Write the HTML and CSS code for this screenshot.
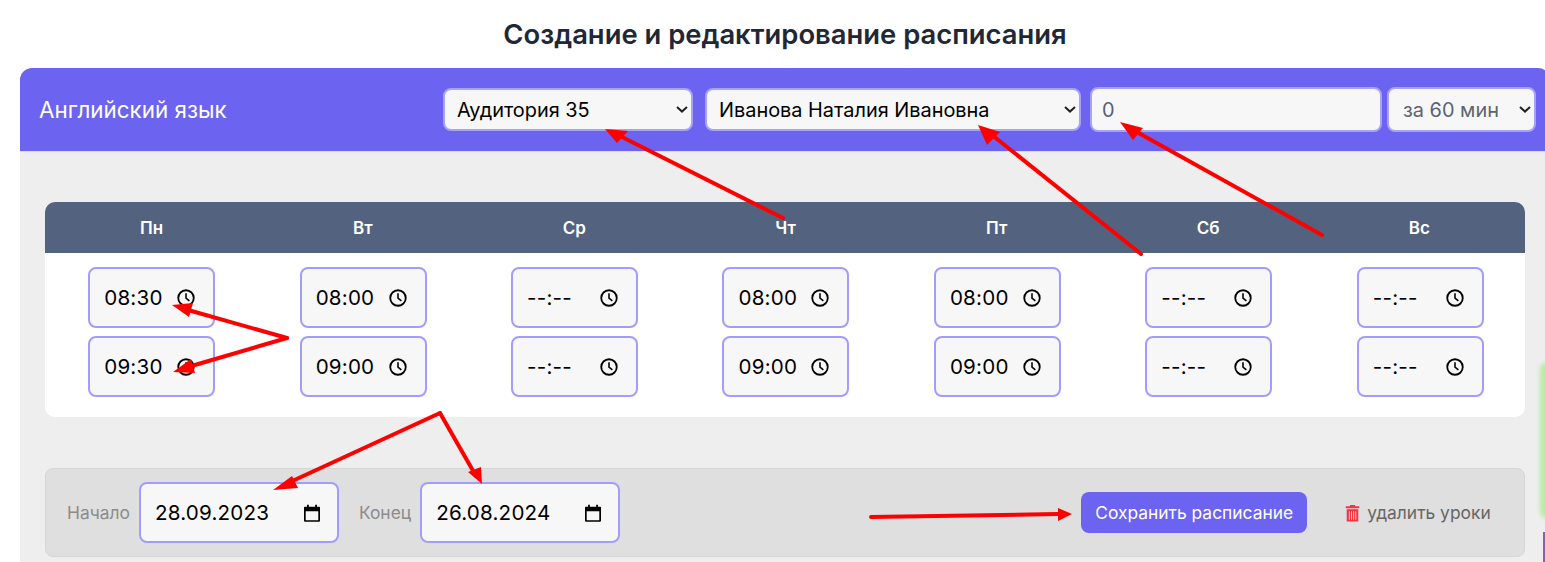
FILE: index.html
```html
<!DOCTYPE html>
<html lang="ru">
<head>
<meta charset="utf-8">
<title>Создание и редактирование расписания</title>
<link rel="stylesheet" href="styles.css">
</head>
<body>
<div class="page">
  <h1 class="title">Создание и редактирование расписания</h1>
  <section class="panel">
    <header class="panel-head">
      <div class="subject">Английский язык</div>
      <select class="field sel-room"><option>Аудитория 35</option></select>
      <select class="field sel-teacher"><option>Иванова Наталия Ивановна</option></select>
      <input class="field inp-price" type="text" value="0">
      <select class="field sel-per"><option>за 60 мин</option></select>
    </header>
    <div class="panel-body">
      <div class="week">
        <div class="week-head">
          <div>Пн</div><div>Вт</div><div>Ср</div><div>Чт</div><div>Пт</div><div>Сб</div><div>Вс</div>
        </div>
        <div class="week-grid">
          <div class="day">
            <div class="tbox"><span>08:30</span><svg class="ic" viewBox="0 0 16 16"><use href="#clock"/></svg></div>
            <div class="tbox"><span>09:30</span><svg class="ic" viewBox="0 0 16 16"><use href="#clock"/></svg></div>
          </div>
          <div class="day">
            <div class="tbox"><span>08:00</span><svg class="ic" viewBox="0 0 16 16"><use href="#clock"/></svg></div>
            <div class="tbox"><span>09:00</span><svg class="ic" viewBox="0 0 16 16"><use href="#clock"/></svg></div>
          </div>
          <div class="day">
            <div class="tbox"><span>--:--</span><svg class="ic" viewBox="0 0 16 16"><use href="#clock"/></svg></div>
            <div class="tbox"><span>--:--</span><svg class="ic" viewBox="0 0 16 16"><use href="#clock"/></svg></div>
          </div>
          <div class="day">
            <div class="tbox"><span>08:00</span><svg class="ic" viewBox="0 0 16 16"><use href="#clock"/></svg></div>
            <div class="tbox"><span>09:00</span><svg class="ic" viewBox="0 0 16 16"><use href="#clock"/></svg></div>
          </div>
          <div class="day">
            <div class="tbox"><span>08:00</span><svg class="ic" viewBox="0 0 16 16"><use href="#clock"/></svg></div>
            <div class="tbox"><span>09:00</span><svg class="ic" viewBox="0 0 16 16"><use href="#clock"/></svg></div>
          </div>
          <div class="day">
            <div class="tbox"><span>--:--</span><svg class="ic" viewBox="0 0 16 16"><use href="#clock"/></svg></div>
            <div class="tbox"><span>--:--</span><svg class="ic" viewBox="0 0 16 16"><use href="#clock"/></svg></div>
          </div>
          <div class="day">
            <div class="tbox"><span>--:--</span><svg class="ic" viewBox="0 0 16 16"><use href="#clock"/></svg></div>
            <div class="tbox"><span>--:--</span><svg class="ic" viewBox="0 0 16 16"><use href="#clock"/></svg></div>
          </div>
        </div>
      </div>
      <div class="foot">
        <span class="lbl">Начало</span>
        <div class="dbox"><span>28.09.2023</span><svg class="ic" viewBox="0 0 16 16"><use href="#cal"/></svg></div>
        <span class="lbl lbl-end">Конец</span>
        <div class="dbox"><span>26.08.2024</span><svg class="ic" viewBox="0 0 16 16"><use href="#cal"/></svg></div>
        <button class="save" type="button">Сохранить расписание</button>
        <a class="del">
          <svg class="trash" viewBox="0 0 14 16"><path fill="#f7333f" d="M4.6 1.6V.6h4.8v1h3.9v2H.7v-2zM1.6 4.6h10.8V16H1.6zM3.6 6.4v7.8h.9V6.4zm2 0v7.8h.9V6.4zm2 0v7.8h.9V6.4zm2 0v7.8h.9V6.4z" fill-rule="evenodd"/></svg>
          удалить уроки
        </a>
      </div>
    </div>
  </section>
</div>
<div class="edge-green"></div>
<div class="edge-purple"></div>
<svg class="arrows" width="1545" height="562" viewBox="0 0 1545 562">
  <defs>
    <g id="clock"><circle cx="8" cy="8" r="6.9" fill="none" stroke="#000" stroke-width="1.6"/><path d="M8 3.8V8.2l3 2.4" fill="none" stroke="#000" stroke-width="1.4"/></g>
    <g id="cal"><path d="M1.5 2.5h13a.6.6 0 0 1 .6.6v11.8a.9.9 0 0 1-.9.9H1.8a.9.9 0 0 1-.9-.9V3.1a.6.6 0 0 1 .6-.6zM2.4 6.4v8.1h11.2V6.4z" fill-rule="evenodd"/><path d="M3.6.6h1.6v2.4H3.6zM10.8.6h1.6v2.4h-1.6z"/></g>
  </defs>
  <g class="arr-line">
    <path d="M783 218L622 137"/>
    <path d="M1141 254L992 135"/>
    <path d="M1322 235L1135 131"/>
    <path d="M287 338L188 310"/>
    <path d="M287 338L188 367"/>
    <path d="M440 413L288 483"/>
    <path d="M440 413L476 476"/>
    <path d="M871 517L1058 514"/>
  </g>
  <g class="arr-head">
    <polygon points="605,129 628,131 617,143"/>
    <polygon points="978,125 1000,132 987,145"/>
    <polygon points="1120,122 1143,128 1133,140"/>
    <polygon points="172,305 193,303 189,317"/>
    <polygon points="173,372 191,359 195,373"/>
    <polygon points="273,490 292,476 298,488"/>
    <polygon points="482,484 468,472 481,467"/>
    <polygon points="1072,514 1058,508 1058,521"/>
  </g>
</svg>
</body>
</html>
```
FILE: styles.css
```css
* { box-sizing: border-box; }
html, body { margin: 0; height: 562px; overflow: hidden; background: #fff; }
body { position: relative; font-family: Inter, "Liberation Sans", sans-serif; color: #212529; }
.page { width: 1570px; padding: 16px 20px 0; }
.title { width: 1530px; margin: 0 0 16px; font-size: 27.4px; line-height: 36px; font-weight: 600; text-align: center; color: #212734; }
.panel { width: 1530px; }
.panel-head { display: flex; align-items: center; height: 84px; padding: 0 10px 0 19px; background: #6c63f0; border-radius: 12px 12px 0 0; border-bottom: 1px solid #dcdcf0; }
.subject { width: 404px; color: #fff; font-size: 22.4px; }
.field { height: 43px; margin: 0; background-color: #f7f7f7; border: 2px solid #a7a3f8; border-radius: 8px; font-family: inherit; font-size: 19.9px; color: #000; }
select.field { appearance: none; background-repeat: no-repeat; background-position: right 3px center; background-size: 12px 7px; background-image: url("data:image/svg+xml,%3Csvg xmlns='http://www.w3.org/2000/svg' viewBox='0 0 12 7'%3E%3Cpath d='M1 1l5 4.6L11 1' fill='none' stroke='%23222' stroke-width='2'/%3E%3C/svg%3E"); }
.sel-room { width: 250px; padding-left: 12px; margin-right: 12px; }
.sel-teacher { width: 376px; padding-left: 12px; margin-right: 9px; }
.inp-price { width: 292px; height: 45px; padding-left: 10px; margin-right: 5px; color: #56606e; }
select.sel-per { width: 149px; height: 45px; padding-left: 14px; color: #5c6470; }
.panel-body { background: #eee; padding: 50px 25px 10px; }
.week { background: #fff; border-radius: 10px; height: 215px; margin-bottom: 51px; }
.week-head { display: grid; grid-template-columns: repeat(7, 1fr); height: 51px; padding-left: 1px; padding-right: 0; align-items: center; background: #52627f; border-radius: 10px 10px 0 0; text-align: center; color: #fff; font-size: 17px; font-weight: 600; }
.week-grid { display: grid; grid-template-columns: repeat(7, 1fr); padding: 14px 0 0 1px; margin-right: -1px; }
.day { display: flex; flex-direction: column; align-items: center; gap: 8px; }
.tbox, .dbox { display: flex; align-items: center; height: 61px; background: #f7f7f7; border: 2px solid #a29dfa; border-radius: 8px; font-size: 20.6px; letter-spacing: .2px; color: #000; }
.tbox { width: 127px; justify-content: space-between; padding: 0 18px 0 14px; }
.ic { width: 18px; height: 18px; flex: none; }
.foot { display: flex; align-items: center; height: 89px; background: #dfdfdf; border: 1px solid #d6d6d6; border-radius: 8px; padding: 0 21px; }
.lbl { color: #8c8c8c; font-size: 17.4px; margin-right: 9px; }
.lbl-end { margin-left: 20px; }
.dbox { width: 200px; justify-content: space-between; padding: 0 16px 0 14px; }
.save { height: 41px; width: 226px; margin-left: 461px; background: #6c63f0; border: 0; border-radius: 8px; color: #fff; font: 17.4px Inter, "Liberation Sans", sans-serif; }
.del { display: flex; align-items: center; gap: 7px; margin-left: 38px; color: #666; font-size: 17.4px; white-space: nowrap; }
.trash { width: 15px; height: 18px; }
.edge-green { position: absolute; left: 1540px; top: 362px; width: 20px; height: 157px; background: #b9eaa5; filter: blur(2px); border-radius: 8px; }
.edge-purple { position: absolute; left: 1543px; top: 532px; width: 2px; height: 30px; background: #8a5fa8; }
.arrows { position: absolute; left: 0; top: 0; pointer-events: none; }
.arr-line path { fill: none; stroke: #f00; stroke-width: 4; stroke-linecap: round; }
.arr-head polygon { fill: #f00; }
```
